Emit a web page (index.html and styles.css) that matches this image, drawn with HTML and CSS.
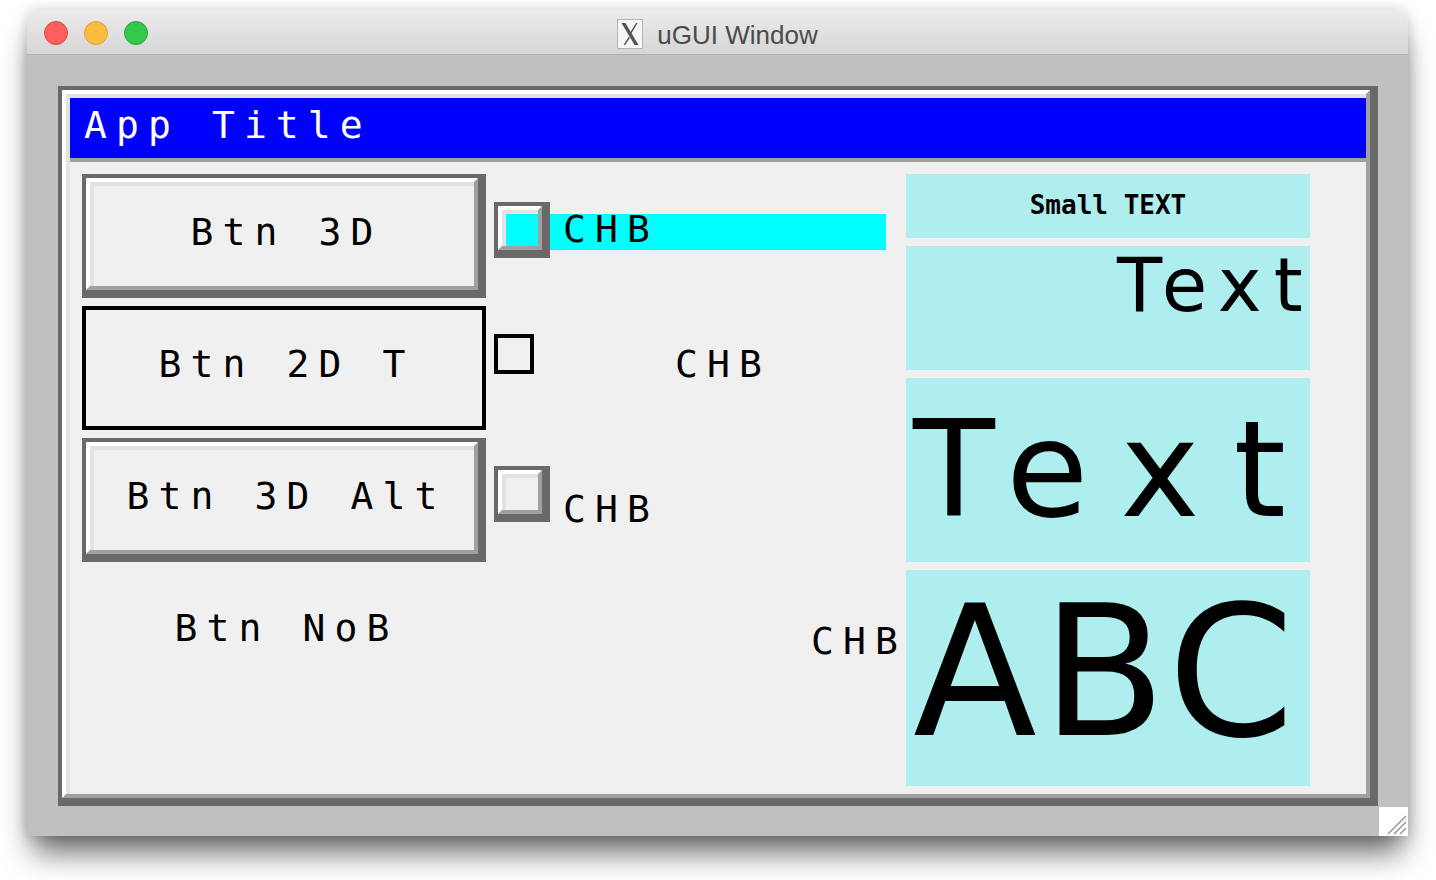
FILE: index.html
```html
<!DOCTYPE html>
<html>
<head>
<meta charset="utf-8">
<link rel="stylesheet" href="styles.css">
</head>
<body>
<div class="win">
  <div class="titlebar">
    <div class="lights">
      <span class="light red"></span>
      <span class="light yellow"></span>
      <span class="light green"></span>
    </div>
    <div class="wtitle">
      <svg class="xicon" width="26" height="30" viewBox="0 0 26 30">
        <rect x="0.5" y="0.5" width="25" height="29" fill="#f6f6f6" stroke="#b5b5b5"/>
        <path d="M4.5 4 L8.5 4 L21.5 26 L17.5 26 Z" fill="#555"/>
        <path d="M19 4 L20.6 4 L14.1 15 L13.2 13.5 Z M11.9 17.6 L12.8 19.1 L8.2 26 L6.6 26 Z" fill="#555"/>
      </svg>
      <span>uGUI Window</span>
    </div>
    <div></div>
  </div>
  <div class="client">
    <div class="b3 frame">
      <div class="b3m">
        <div class="b3i framein">
          <div class="apptitle px">App Title</div>
          <div class="appbody">
            <div class="col">
              <div class="btn b3">
                <div class="b3m"><div class="b3i btnface px">Btn 3D</div></div>
              </div>
              <div class="btn b2 btnface px">Btn 2D T</div>
              <div class="btn b3">
                <div class="b3m"><div class="b3i btnface px">Btn 3D Alt</div></div>
              </div>
              <div class="btn btnface px">Btn NoB</div>
            </div>
            <div class="col">
              <div class="chkrow">
                <div class="cbox b3"><div class="b3m"><div class="b3i on"></div></div></div>
                <div class="chblabel hl px">CHB</div>
              </div>
              <div class="chkrow">
                <div class="cbox2"></div>
                <div class="chblabel c2 px">CHB</div>
              </div>
              <div class="chkrow">
                <div class="cbox b3"><div class="b3m"><div class="b3i"></div></div></div>
                <div class="chblabel c3 px">CHB</div>
              </div>
              <div class="chkrow">
                <div class="chblabel c4 px">CHB</div>
              </div>
            </div>
            <div class="col">
              <div class="tbox t1">Small TEXT</div>
              <div class="tbox t2">Text</div>
              <div class="tbox t3">Text</div>
              <div class="tbox t4">ABC</div>
            </div>
          </div>
        </div>
      </div>
    </div>
    <div class="grip">
      <svg width="29" height="29" viewBox="0 0 29 29">
        <path d="M9 27 L27 9 M15 27 L27 15 M21 27 L27 21" stroke="#9a9a9a" stroke-width="1.6"/>
      </svg>
    </div>
  </div>
</div>
</body>
</html>
```
FILE: styles.css
```css
html, body {
  margin: 0;
  padding: 0;
  background: #ffffff;
}
body {
  width: 1436px;
  height: 880px;
  overflow: hidden;
}
.win {
  margin: 10px 0 0 27px;
  width: 1381px;
  border-radius: 10px 10px 0 0;
  box-shadow: 0 22px 30px -6px rgba(0,0,0,0.6), 0 0 14px rgba(0,0,0,0.18);
}
.titlebar {
  height: 44px;
  border-bottom: 1px solid #b1b1b1;
  border-radius: 10px 10px 0 0;
  background: linear-gradient(#ececec, #d6d6d6);
  display: grid;
  grid-template-columns: 1fr auto 1fr;
  align-items: center;
}
.lights {
  display: flex;
  gap: 16px;
  padding: 2px 0 0 17px;
}
.light {
  width: 22px;
  height: 22px;
  border-radius: 50%;
  border: 1px solid;
}
.red { background: #fc605c; border-color: #de4842; }
.yellow { background: #fdbc40; border-color: #dea236; }
.green { background: #34c84a; border-color: #25a537; }
.wtitle {
  display: flex;
  align-items: center;
  gap: 14px;
  font-family: "Liberation Sans", Arial, sans-serif;
  font-size: 26px;
  color: #4b4b4b;
  padding-top: 6px;
}
.xicon { display: block; margin-top: -2px; }

.client {
  position: relative;
  background: #c0c0c0;
  padding: 31px 30px 30px 31px;
}
.grip {
  position: absolute;
  right: 0;
  bottom: 0;
  width: 29px;
  height: 29px;
  background: #ffffff;
}
.grip svg { display: block; }

/* 3D frame used for window, buttons, checkboxes */
.b3 {
  display: flex;
  box-sizing: border-box;
  border-style: solid;
  border-color: #696969;
  border-width: 4px 8px 8px 4px;
}
.b3m {
  flex: 1;
  display: flex;
  border-style: solid;
  border-width: 4px;
  border-color: #ffffff #a0a0a0 #a0a0a0 #ffffff;
}
.b3i {
  flex: 1;
  border-style: solid;
  border-width: 4px 0 0 4px;
  border-color: #e3e3e3;
  background: #f0f0f0;
}
.frame {
  width: 1320px;
  height: 720px;
}
.framein {
  display: flex;
  flex-direction: column;
}

.px {
  font-family: "DejaVu Sans Mono", monospace;
  font-size: 38px;
  line-height: 28px;
  letter-spacing: 9.1px;
  color: #000;
  white-space: pre;
}
.apptitle {
  box-sizing: border-box;
  height: 64px;
  background: #0000ff;
  border-bottom: 4px solid #a0a0a0;
  color: #ffffff;
  padding: 13px 0 0 14px;
}
.appbody {
  flex: 1;
  background: #f0f0f0;
  box-sizing: border-box;
  padding: 12px 0 0 12px;
  display: flex;
  gap: 8px;
}
.col {
  width: 404px;
  display: flex;
  flex-direction: column;
  gap: 8px;
}
.btn {
  height: 124px;
  box-sizing: border-box;
}
.btnface {
  display: flex;
  align-items: center;
  justify-content: center;
  padding: 0 0 8px 5px;
}
.b2 {
  border: 4px solid #000;
}

.chkrow {
  height: 124px;
  box-sizing: border-box;
  padding-top: 28px;
  display: flex;
  align-items: flex-start;
}
.cbox {
  width: 56px;
  height: 56px;
}
.on { background: #00ffff; }
.cbox2 {
  width: 40px;
  height: 40px;
  box-sizing: border-box;
  border: 4px solid #000;
}
.chblabel.hl {
  width: 336px;
  height: 36px;
  box-sizing: border-box;
  margin-top: 12px;
  padding: 1px 0 0 13px;
  background: #00ffff;
}
.chblabel.c2 {
  margin: 16px 0 0 141px;
}
.chblabel.c3 {
  margin: 29px 0 0 13px;
}
.chblabel.c4 {
  margin: 29px 0 0 317px;
}

.tbox {
  background: #afeeee;
  box-sizing: border-box;
  color: #000;
  white-space: pre;
}
.t1 {
  height: 64px;
  padding-top: 22px;
  text-align: center;
  font-family: "DejaVu Sans Mono", monospace;
  font-weight: bold;
  font-size: 26px;
  line-height: 19px;
}
.t2 {
  height: 124px;
  padding: 12px 0 0 211px;
  font-family: "DejaVu Sans", sans-serif;
  font-size: 74px;
  line-height: 54px;
  letter-spacing: 12px;
}
.t3 {
  height: 184px;
  padding: 43px 0 0 7px;
  font-family: "DejaVu Sans", sans-serif;
  font-size: 134px;
  line-height: 98px;
  letter-spacing: 34px;
}
.t4 {
  height: 216px;
  padding: 37px 0 0 7px;
  font-family: "DejaVu Sans", sans-serif;
  font-size: 181px;
  line-height: 132px;
  letter-spacing: 5px;
}
```
